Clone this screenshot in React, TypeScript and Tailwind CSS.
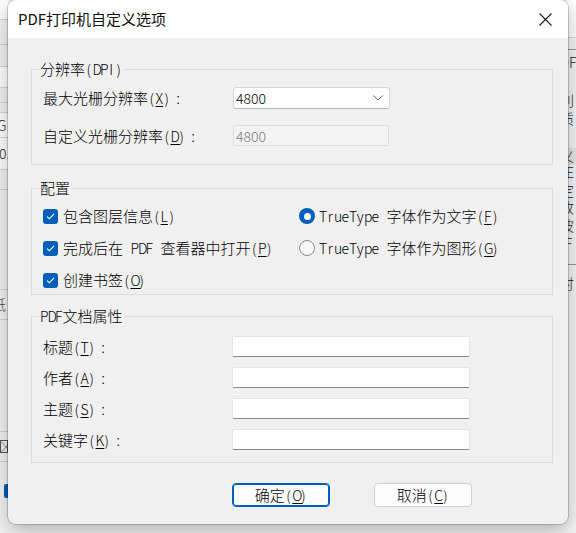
import React from "react";

function T({ s }: { s: string }) {
  const out: React.ReactNode[] = [];
  let buf = "";
  let key = 0;
  const flush = () => {
    if (buf) {
      out.push(<span key={key++}>{buf}</span>);
      buf = "";
    }
  };
  let i = 0;
  while (i < s.length) {
    const c = s[i];
    if (c === "&") {
      flush();
      out.push(
        <span key={key++} className="inline-block w-[7.5px] text-center text-[14px] underline underline-offset-[2px] decoration-1">
          {s[i + 1]}
        </span>
      );
      i += 2;
      continue;
    }
    if (c === "：") {
      flush();
      out.push(
        <span key={key++} className="inline-block w-[15px] text-center">
          :
        </span>
      );
      i++;
      continue;
    }
    if (c.charCodeAt(0) < 128) {
      flush();
      out.push(
        <span key={key++} className="inline-block w-[7.5px] text-center text-[14px]">
          {c === " " ? "\u00a0" : c}
        </span>
      );
      i++;
      continue;
    }
    buf += c;
    i++;
  }
  flush();
  return <>{out}</>;
}

function Legend({ s }: { s: string }) {
  return (
    <span className="absolute left-[7px] top-[-9px] bg-[#f0f0f0] px-[1px] leading-[16px] whitespace-nowrap">
      <T s={s} />
    </span>
  );
}

function Check({ label }: { label: string }) {
  return (
    <div className="flex h-[20px] items-center gap-[5px] whitespace-nowrap">
      <span className="flex h-[15px] w-[15px] items-center justify-center rounded-[3px] bg-[#005fb8]">
        <svg width="9" height="7" viewBox="0 0 9 7" fill="none">
          <path d="M1 3.6 L3.3 5.8 L8 1" stroke="white" strokeWidth="1.1" />
        </svg>
      </span>
      <span className="leading-[20px]">
        <T s={label} />
      </span>
    </div>
  );
}

function Radio({ label, on }: { label: string; on?: boolean }) {
  return (
    <div className="flex h-[20px] items-center gap-[4px] whitespace-nowrap">
      {on ? (
        <span className="flex h-[16px] w-[16px] items-center justify-center rounded-full bg-[#005fb8]">
          <span className="h-[7px] w-[7px] rounded-full bg-white" />
        </span>
      ) : (
        <span className="h-[16px] w-[16px] rounded-full border border-[#8a8a8a] bg-[#f7f7f7]" />
      )}
      <span className="leading-[20px]">
        <T s={label} />
      </span>
    </div>
  );
}

function Field({ label }: { label: string }) {
  return (
    <div className="flex h-[21px] items-center">
      <span className="w-[189px] leading-[20px]">
        <T s={label} />
      </span>
      <div className="h-[21px] w-[238px] rounded-[2px] border border-[#e4e4e4] border-b-[#8a8a8a] bg-white" />
    </div>
  );
}

function LeftStrip() {
  return (
    <div className="flex h-full w-[8px] shrink-0 flex-col overflow-hidden bg-[#f3f3f3] text-[14px] leading-[15px] text-[#222]">
      <div className="h-[20px] border-b border-[#d6d6d6] bg-white" />
      <div className="h-[25px] border-b border-[#d6d6d6]" />
      <div className="h-[22px] border-b border-[#d6d6d6]" />
      <div className="h-[21px] border-b border-[#d6d6d6] bg-white" />
      <div className="h-[15px] border-b border-[#d6d6d6]" />
      <div className="h-[10px] border-b border-[#d6d6d6]" />
      <div className="flex h-[25px] items-center border-b border-[#d6d6d6] bg-white">
        <span className="ml-[-3px]">G</span>
      </div>
      <div className="flex h-[32px] items-center border-b border-[#d6d6d6] bg-white">
        <span className="ml-[-1px]">0.</span>
      </div>
      <div className="h-[20px] border-b border-[#d6d6d6]" />
      <div className="h-[100px] border-b border-[#d6d6d6]" />
      <div className="flex h-[30px] items-center border-b border-[#d6d6d6]">
        <span className="ml-[-8px] text-[#444]">纸</span>
      </div>
      <div className="h-[112px] border-b border-[#d6d6d6]" />
      <div className="flex h-[30px] items-center border-b border-[#d6d6d6]">
        <span className="h-[13px] w-[8px] border border-[#555] text-[10px] leading-[11px]">╳</span>
      </div>
      <div className="h-[22px]" />
      <div className="ml-[4px] h-[14px] w-[4px] rounded-l-[2px] bg-[#005fb8]" />
      <div className="flex-1 bg-[#f3f3f3]" />
    </div>
  );
}

function RightStrip() {
  const rows: [string, number, string][] = [
    ["PDF", 62, "-ml-[16px]"],
    ["利", 100, "-ml-[7px]"],
    ["质", 118, "-ml-[7px]"],
    ["义", 156, "-ml-[7px]"],
    ["E", 172, "-ml-[1px]"],
    ["定", 190, "-ml-[7px]"],
    ["改", 207, "-ml-[7px]"],
    ["波", 225, "-ml-[7px]"],
    ["IF", 243, "-ml-[6px]"],
    ["时", 283, "-ml-[7px]"],
  ];
  return (
    <div className="relative h-full w-[9px] shrink-0 overflow-hidden bg-[#f5f5f5] text-[14px] text-[#222]">
      <div className="h-[38px] border-b border-[#d9d9d9] bg-white" />
      <div className="h-[12px] border-b border-[#9a9a9a]" />
      <div className="absolute left-0 top-[148px] h-[17px] w-full bg-[#e6e6e6]" />
      {rows.map(([t, y, ml]) => (
        <div
          key={y}
          className={"absolute left-0 whitespace-nowrap leading-[14px] " + ml}
          style={{ top: y - 7 }}
        >
          {t}
        </div>
      ))}
      <div className="absolute left-0 top-[264px] h-px w-full bg-[#9a9a9a]" />
    </div>
  );
}

export default function App() {
  return (
    <div className="relative flex h-[533px] w-[576px] overflow-hidden bg-[#f3f3f3] font-['Noto_Sans_CJK_SC',sans-serif] text-[15px] font-light text-black">
      <LeftStrip />
      <div className="flex-1 bg-[#f3f3f3]" />
      <RightStrip />

      <div className="absolute left-[8px] top-0 flex h-[524px] w-[560px] flex-col overflow-hidden rounded-[8px] bg-[#f0f0f0] shadow-[0_6px_20px_rgba(0,0,0,0.28),0_0_0_1px_rgba(0,0,0,0.18)]">
        <div className="flex h-[38px] shrink-0 items-center bg-white pl-[10px] pr-[16px]">
          <span className="flex-1 text-[15px] font-normal leading-[20px] text-[#111]">PDF打印机自定义选项</span>
          <svg width="13" height="13" viewBox="0 0 13 13" fill="none">
            <path d="M0.5 0.5 L12.5 12.5 M12.5 0.5 L0.5 12.5" stroke="#1b1b1b" strokeWidth="1.1" />
          </svg>
        </div>

        <div className="flex flex-col pl-[23px] pr-[15px]">
          {/* Resolution */}
          <div className="relative mt-[31px] flex flex-col gap-[16px] border border-[#dcdcdc] pb-[18px] pl-[11px] pt-[17px]">
            <Legend s="分辨率(DPI)" />
            <div className="flex h-[22px] items-center">
              <span className="w-[190px] leading-[20px]">
                <T s="最大光栅分辨率(&X)：" />
              </span>
              <div className="flex h-[22px] w-[157px] items-center justify-between rounded-[3px] border border-[#d6d6d6] border-b-[#b8b8b8] bg-white pl-[2px] pr-[6px]">
                <span className="leading-[20px]">
                  <T s="4800" />
                </span>
                <svg width="10" height="6" viewBox="0 0 10 6" fill="none">
                  <path d="M0.5 0.5 L5 5 L9.5 0.5" stroke="#6a6a6a" strokeWidth="1" />
                </svg>
              </div>
            </div>
            <div className="flex h-[21px] items-center">
              <span className="w-[190px] leading-[20px]">
                <T s="自定义光栅分辨率(&D)：" />
              </span>
              <div className="flex h-[21px] w-[156px] items-center rounded-[2px] border border-[#dedede] bg-[#f3f3f3] pl-[2px] text-[#7a7a7a]">
                <span className="leading-[20px]">
                  <T s="4800" />
                </span>
              </div>
            </div>
          </div>

          {/* Config */}
          <div className="relative mt-[23px] grid grid-cols-[256px_1fr] gap-y-[12px] border border-[#dcdcdc] pb-[4px] pl-[11px] pt-[17px]">
            <Legend s="配置" />
            <Check label="包含图层信息(&L)" />
            <Radio on label="TrueType 字体作为文字(&F)" />
            <Check label="完成后在 PDF 查看器中打开(&P)" />
            <Radio label="TrueType 字体作为图形(&G)" />
            <Check label="创建书签(&O)" />
          </div>

          {/* Doc props */}
          <div className="relative mt-[21px] flex flex-col gap-[10px] border border-[#dcdcdc] pb-[12px] pl-[11px] pt-[19px]">
            <Legend s="PDF文档属性" />
            <Field label="标题(&T)：" />
            <Field label="作者(&A)：" />
            <Field label="主题(&S)：" />
            <Field label="关键字(&K)：" />
          </div>

          {/* Buttons */}
          <div className="ml-[201px] mt-[20px] flex gap-[44px]">
            <button className="flex h-[24px] w-[98px] items-center justify-center rounded-[4px] border border-[#005fb8] bg-[#fdfdfd] leading-[20px] shadow-[inset_0_0_0_1px_#005fb8]">
              <T s="确定(&O)" />
            </button>
            <button className="flex h-[24px] w-[98px] items-center justify-center rounded-[4px] border border-[#d0d0d0] bg-[#fdfdfd] leading-[20px]">
              <T s="取消(&C)" />
            </button>
          </div>
        </div>
      </div>
    </div>
  );
}
